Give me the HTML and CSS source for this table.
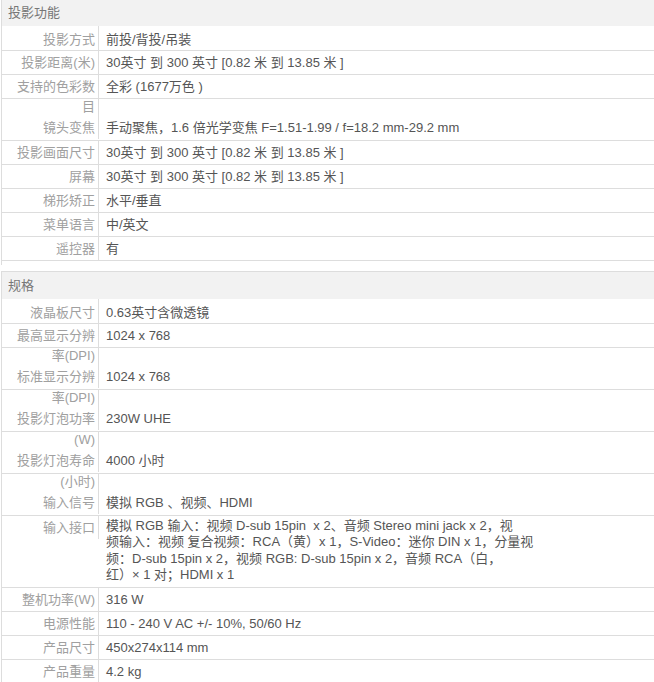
FILE: index.html
```html
<!DOCTYPE html>
<html lang="zh-CN">
<head>
    <meta charset="UTF-8">
    <meta name="viewport" content="width=device-width, initial-scale=1.0">
    <title>规格参数</title>
    <link rel="stylesheet" href="styles.css">
</head>
<body>
    <div class="spec">
        <div class="head">投影功能</div>
        <div class="row">
            <div class="label">投影方式</div>
            <div class="val">前投/背投/吊装</div>
        </div>
        <div class="row">
            <div class="label">投影距离(米)</div>
            <div class="val">30英寸 到 300 英寸 [0.82 米 到 13.85 米 ]</div>
        </div>
        <div class="row">
            <div class="label">支持的色彩数</div>
            <div class="val">全彩 (1677万色 )</div>
        </div>
        <div class="row tall">
            <div class="label"><span class="over">目</span>镜头变焦</div>
            <div class="val">手动聚焦，1.6 倍光学变焦 F=1.51-1.99 / f=18.2 mm-29.2 mm</div>
        </div>
        <div class="row">
            <div class="label">投影画面尺寸</div>
            <div class="val">30英寸 到 300 英寸 [0.82 米 到 13.85 米 ]</div>
        </div>
        <div class="row">
            <div class="label">屏幕</div>
            <div class="val">30英寸 到 300 英寸 [0.82 米 到 13.85 米 ]</div>
        </div>
        <div class="row">
            <div class="label">梯形矫正</div>
            <div class="val">水平/垂直</div>
        </div>
        <div class="row">
            <div class="label">菜单语言</div>
            <div class="val">中/英文</div>
        </div>
        <div class="row">
            <div class="label">遥控器</div>
            <div class="val">有</div>
        </div>
    </div>

    <div class="spec">
        <div class="head">规格</div>
        <div class="row">
            <div class="label">液晶板尺寸</div>
            <div class="val">0.63英寸含微透镜</div>
        </div>
        <div class="row">
            <div class="label">最高显示分辨</div>
            <div class="val">1024 x 768</div>
        </div>
        <div class="row tall">
            <div class="label"><span class="over">率(DPI)</span>标准显示分辨</div>
            <div class="val">1024 x 768</div>
        </div>
        <div class="row tall">
            <div class="label"><span class="over">率(DPI)</span>投影灯泡功率</div>
            <div class="val">230W UHE</div>
        </div>
        <div class="row tall">
            <div class="label"><span class="over">(W)</span>投影灯泡寿命</div>
            <div class="val">4000 小时</div>
        </div>
        <div class="row tall">
            <div class="label"><span class="over">(小时)</span>输入信号</div>
            <div class="val">模拟 RGB 、视频、HDMI</div>
        </div>
        <div class="row">
            <div class="label">输入接口</div>
            <div class="val multi">模拟 RGB 输入：视频 D-sub 15pin &nbsp;x 2、音频 Stereo mini jack x 2，视<br>频输入：视频 复合视频：RCA（黄）x 1，S-Video：迷你 DIN x 1，分量视<br>频：D-sub 15pin x 2，视频 RGB: D-sub 15pin x 2，音频 RCA（白，<br>红）× 1 对；HDMI x 1</div>
        </div>
        <div class="row">
            <div class="label">整机功率(W)</div>
            <div class="val">316 W</div>
        </div>
        <div class="row">
            <div class="label">电源性能</div>
            <div class="val">110 - 240 V AC +/- 10%, 50/60 Hz</div>
        </div>
        <div class="row">
            <div class="label">产品尺寸</div>
            <div class="val">450x274x114 mm</div>
        </div>
        <div class="row">
            <div class="label">产品重量</div>
            <div class="val">4.2 kg</div>
        </div>
    </div>
</body>
</html>
```

FILE: styles.css
```css
html{
    overflow: hidden;
}
body{
    margin: 0;
    font-family: "Liberation Sans", Arial, "Noto Sans CJK SC", sans-serif;
    font-size: 13px;
    color: #555555;
    background: #ffffff;
}
.spec{
    margin: 0 0 6px 1px;
    padding-bottom: 4px;
    border-left: 1px solid #dddddd;
}
.head{
    height: 26px;
    line-height: 26px;
    padding-left: 6px;
    background: #f2f2f2;
    color: #777777;
}
/* 第二块的标题带上边框 */
.spec + .spec .head{
    height: 27px;
    line-height: 27px;
    border-top: 1px solid #dddddd;
}
.row{
    display: flex;
    align-items: flex-start;
    border-bottom: 1px solid #dddddd;
}
.label{
    box-sizing: border-box;
    flex: none;
    width: 97px;
    padding: 1px 3px 1px 0;
    line-height: 21px;
    text-align: right;
    color: #a0a0a0;
    border-right: 1px solid #dddddd;
}
.val{
    flex: 1;
    padding: 1px 0 1px 7px;
    line-height: 21px;
    white-space: nowrap;
}
/* 标题后第一行稍高 */
.head + .row .label,
.head + .row .val{
    padding-top: 3px;
    padding-bottom: 0;
}
/* 上一行的标签折下来的字 */
.tall .over{
    display: block;
    margin-top: -4px;
}
.tall .val{
    padding-top: 18px;
    padding-bottom: 2px;
}
.multi{
    padding-top: 2px;
    padding-bottom: 4px;
    line-height: 16.25px;
}
```
